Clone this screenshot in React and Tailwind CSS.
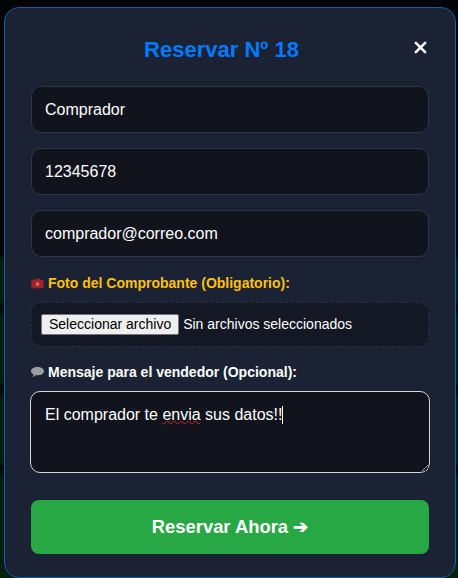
import React from "react";

const field = "w-full h-[47px] rounded-[10px] border border-[#2f3648] bg-[#11141d] px-[13px] text-[16px] text-white outline-none";

function Camera() {
  return (
    <svg viewBox="0 0 14 12" className="w-[13px] h-[11px] shrink-0">
      <path d="M4 2 L5 .8 H9 L10 2 H12.2 C13.2 2 13.7 2.6 13.7 3.5 V9.8 C13.7 10.8 13.2 11.3 12.2 11.3 H1.8 C.8 11.3 .3 10.8 .3 9.8 V3.5 C.3 2.6 .8 2 1.8 2 Z" fill="#a61f2b" />
      <circle cx="7" cy="6.6" r="2" fill="#c8737a" />
    </svg>
  );
}

function Bubble() {
  return (
    <svg viewBox="0 0 14 11" className="w-[13px] h-[12px] shrink-0">
      <path d="M7 0 C10.9 0 14 2 14 4.6 C14 7.2 10.9 9 7 9 C6.4 9 5.8 8.9 5.2 8.8 C4.3 9.8 3 10.6 1.6 10.9 C2.3 9.9 2.8 8.9 2.8 7.9 C1.1 7.1 0 6 0 4.6 C0 2 3.1 0 7 0 Z" fill="#9c9ea1" />
    </svg>
  );
}

export default function App() {
  return (
    <div className="w-[458px] h-[578px] overflow-hidden bg-[linear-gradient(180deg,#020407_0%,#020407_44%,#03200f_45%,#03200f_52%,#020705_53%,#03200f_55%,#03200f_66%,#020705_67%,#03200f_69%,#03200f_80%,#020705_81%,#03200f_83%,#03200f_100%)] font-['Liberation_Sans',Arial,sans-serif] pt-[7px] pl-[4px]">
      <div className="relative w-[452px] h-[571px] rounded-[15px] border border-[#0f5ea8] bg-[#1a2233] px-[26px] pt-[25px]">
        <div className="flex items-center h-[32px] mt-[1px]">
          <h2 className="flex-1 text-center text-[22px] leading-[32px] font-bold text-[#007bff]">Reservar Nº 18</h2>
          <button className="w-[18px] ml-[-1px] flex justify-center relative top-[-3px]">
            <svg viewBox="0 0 14 14" className="w-[13px] h-[13px]">
              <path d="M2 2 L12 12 M12 2 L2 12" stroke="#fff" strokeWidth="2.8" strokeLinecap="round" />
            </svg>
          </button>
        </div>

        <div className="mt-[20px] flex flex-col gap-[15px]">
          <input readOnly value="Comprador" className={field} />
          <input readOnly value="12345678" className={field} />
          <input readOnly value="comprador@correo.com" className={field} />
        </div>

        <div className="mt-[17px] flex items-center gap-[4px] h-[18px] text-[14px] font-bold text-[#ffc107]">
          <Camera />
          <span>Foto del Comprobante (Obligatorio):</span>
        </div>

        <div className="mt-[10px] h-[45px] rounded-[10px] border border-dashed border-[#2a3042] bg-[#131824] px-[9px] flex items-center text-[14px] text-white">
          <span className="h-[21px] px-[7px] flex items-center bg-[#efefef] border border-[#767676] rounded-[2px] text-[14px] text-black">Seleccionar archivo</span>
          <span className="ml-[4px]">Sin archivos seleccionados</span>
        </div>

        <div className="mt-[16px] flex items-center gap-[4px] h-[18px] text-[14px] font-bold text-white">
          <Bubble />
          <span>Mensaje para el vendedor (Opcional):</span>
        </div>

        <div className="mt-[10px] -mx-px h-[82px] rounded-[10px] border border-[#d6d6d6] bg-[#11141d] px-[14px] pt-[14px] text-[16px] leading-[18px] text-white overflow-auto resize-y">
          El comprador te <span className="underline decoration-wavy decoration-[#c9252d] decoration-1 underline-offset-[0px]">envia</span> sus datos!!<span className="inline-block w-px h-[18px] bg-white align-top" />
        </div>

        <button className="mt-[27px] block w-full h-[54px] rounded-[8px] bg-[#28a745] text-[18.4px] font-bold text-white">
          Reservar Ahora ➔
        </button>
      </div>
    </div>
  );
}
